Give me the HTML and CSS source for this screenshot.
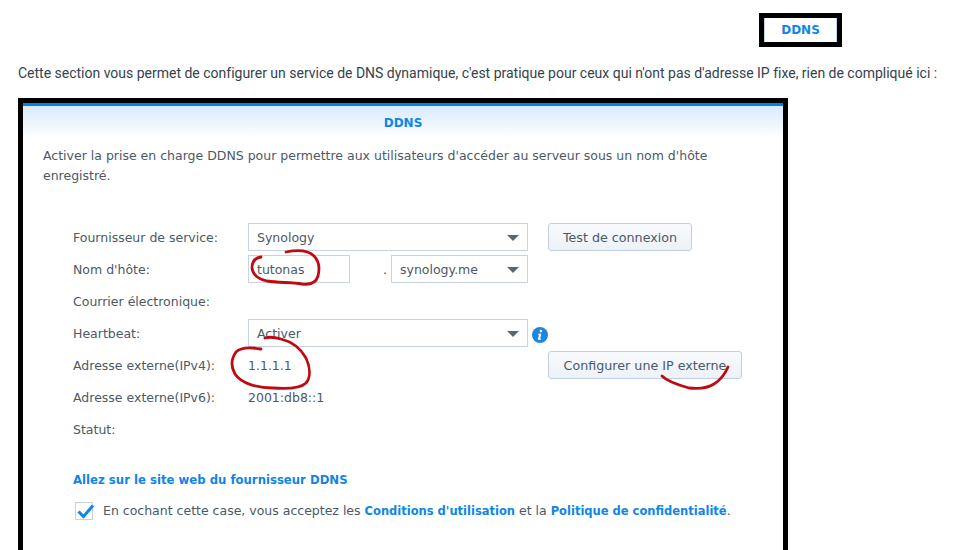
FILE: index.html
```html
<!DOCTYPE html>
<html lang="fr">
<head>
    <meta charset="UTF-8">
    <meta name="viewport" content="width=device-width, initial-scale=1.0">
    <title>DDNS</title>
    <link rel="stylesheet" href="styles.css">
</head>
<body>

<div class="page">
    <div class="tab-row">
        <div class="tab">DDNS</div>
    </div>

    <p class="intro">Cette section vous permet de configurer un service de DNS dynamique, c'est pratique pour ceux qui n'ont pas d'adresse IP fixe, rien de compliqué ici :</p>

    <div class="frame">
        <div class="title-bar">DDNS</div>
        <div class="content">
            <p class="desc">Activer la prise en charge DDNS pour permettre aux utilisateurs d'accéder au serveur sous un nom d'hôte enregistré.</p>

            <div class="form">
                <div class="row">
                    <span class="label">Fournisseur de service:</span>
                    <div class="select wide">Synology<span class="arrow"></span></div>
                    <button class="btn test-btn">Test de connexion</button>
                </div>
                <div class="row">
                    <span class="label">Nom d'hôte:</span>
                    <div class="input">tutonas</div>
                    <span class="dot">.</span>
                    <div class="select domain">synology.me<span class="arrow"></span></div>
                </div>
                <div class="row">
                    <span class="label">Courrier électronique:</span>
                </div>
                <div class="row">
                    <span class="label">Heartbeat:</span>
                    <div class="select wide">Activer<span class="arrow"></span></div>
                    <svg class="info" width="16" height="16" viewBox="0 0 16 16">
                        <circle cx="8" cy="8" r="8" fill="#1c86e0"/>
                        <circle cx="8.9" cy="4.1" r="1.3" fill="#fff"/>
                        <path d="M6.2 6.8h3.2l-1.3 5h1.1l-.3 1H5.8l1.3-5H5.9z" fill="#fff"/>
                    </svg>
                </div>
                <div class="row">
                    <span class="label">Adresse externe(IPv4):</span>
                    <span class="value">1.1.1.1</span>
                    <button class="btn ip-btn">Configurer une IP externe</button>
                </div>
                <div class="row">
                    <span class="label">Adresse externe(IPv6):</span>
                    <span class="value">2001:db8::1</span>
                </div>
                <div class="row">
                    <span class="label">Statut:</span>
                </div>
            </div>

            <a class="provider-link">Allez sur le site web du fournisseur DDNS</a>

            <div class="terms">
                <span class="checkbox">
                    <svg width="20" height="18" viewBox="0 0 20 18">
                        <path d="M2.5 9.5l5 5L17 3.5" fill="none" stroke="#0f86e6" stroke-width="3"/>
                    </svg>
                </span>
                <span>En cochant cette case, vous acceptez les <a>Conditions d'utilisation</a> et la <a>Politique de confidentialité</a>.</span>
            </div>
        </div>
    </div>

    <!-- annotations au feutre rouge -->
    <svg class="scribbles" width="955" height="550" viewBox="0 0 955 550">
        <path d="M261 257C254 258 252 263 252 268C253 276 259 279 267 281C279 283 291 282 302 284C310 285 316 283 318 276C320 268 319 261 314 256C309 251 301 249 286 252"/>
        <path d="M261 349C250 347 241 347 236 352C231 359 231 367 235 374C241 383 256 388 273 388C287 389 301 388 306 383C311 377 310 367 306 358C301 349 293 342 281 339C274 337 268 337 265 338"/>
        <path d="M662 376C668 382 678 385 689 388C699 389 708 388 714 384C722 379 725 374 728 367"/>
    </svg>
</div>

</body>
</html>
```

FILE: styles.css
```css
html, body {
    margin: 0;
    padding: 0;
    background: #ffffff;
}
body {
    height: 550px;
    overflow: hidden;
}
.page {
    position: relative;
    height: 550px;
    overflow: hidden;
}
.tab-row {
    display: flex;
    padding: 13px 0 0 759px;
}
.tab {
    box-sizing: border-box;
    width: 83px;
    height: 34px;
    border: 5px solid #000;
    box-shadow: inset 1px 0 0 #c6d8ee, inset -1px 0 0 #c6d8ee;
    color: #0f86e6;
    font: bold 12px/24px "DejaVu Sans", sans-serif;
    text-align: center;
}
.intro {
    margin: 16px 0 0 18px;
    font: 14px/20px Roboto, sans-serif;
    letter-spacing: -0.005px;
    color: #36424c;
    white-space: nowrap;
}
.frame {
    box-sizing: border-box;
    width: 770px;
    height: 502px;
    margin: 15px 0 0 18px;
    border: 5px solid #000;
    border-bottom: 0;
}
.title-bar {
    height: 32px;
    border-top: 3px solid #0084e3;
    background: linear-gradient(#d9eafb, #ffffff);
    color: #0f86e6;
    font: bold 12px/35px "DejaVu Sans", sans-serif;
    text-align: center;
}
.content {
    padding: 8px 20px 0 20px;
    color: #4b5966;
    font: 12.5px/20px "DejaVu Sans", sans-serif;
}
.desc {
    margin: 0 0 37px 0;
    width: 680px;
}
.form {
    padding-left: 30px;
}
.row {
    display: flex;
    align-items: center;
    height: 28px;
    margin-bottom: 4px;
}
.label {
    width: 175px;
    flex: none;
    padding-top: 2px;
}
.select, .input {
    box-sizing: border-box;
    height: 28px;
    border: 1px solid #c8d3e0;
    padding-left: 8px;
    line-height: 28px;
    background: #fff;
}
.select {
    position: relative;
}
.wide {
    width: 280px;
}
.domain {
    width: 137px;
}
.input {
    width: 102px;
}
.dot {
    box-sizing: border-box;
    width: 41px;
    padding: 2px 4px 0 0;
    text-align: right;
}
.arrow {
    position: absolute;
    right: 8px;
    top: 11px;
    border-left: 6px solid transparent;
    border-right: 6px solid transparent;
    border-top: 6px solid #5a6772;
}
.btn {
    box-sizing: border-box;
    height: 28px;
    margin-left: 20px;
    padding: 0;
    border: 1px solid #c3cfdc;
    border-radius: 3px;
    background: linear-gradient(#f8fafd, #edf2f8);
    color: #4b5966;
    font: 12.7px "DejaVu Sans", sans-serif;
}
.test-btn {
    width: 144px;
}
.ip-btn {
    width: 194px;
    margin-left: 0;
}
.info {
    margin: 4px 0 0 4px;
}
.value {
    width: 300px;
    flex: none;
    padding-top: 2px;
}
.provider-link {
    display: block;
    margin: 27px 0 0 30px;
    color: #0f86e6;
    font-weight: bold;
    font-size: 11.7px;
}
.terms {
    display: flex;
    align-items: center;
    gap: 10px;
    margin: 11px 0 0 32px;
}
.terms a {
    color: #0f86e6;
    font-weight: bold;
    font-size: 11.5px;
}
.checkbox {
    box-sizing: border-box;
    position: relative;
    width: 18px;
    height: 18px;
    border: 1px solid #c8d3e0;
    flex: none;
}
.checkbox svg {
    position: absolute;
    left: 0;
    top: -1px;
}
.scribbles {
    position: absolute;
    left: 0;
    top: 0;
    pointer-events: none;
}
.scribbles path {
    fill: none;
    stroke: #c00a12;
    stroke-width: 2.8;
    stroke-linecap: round;
}
```
